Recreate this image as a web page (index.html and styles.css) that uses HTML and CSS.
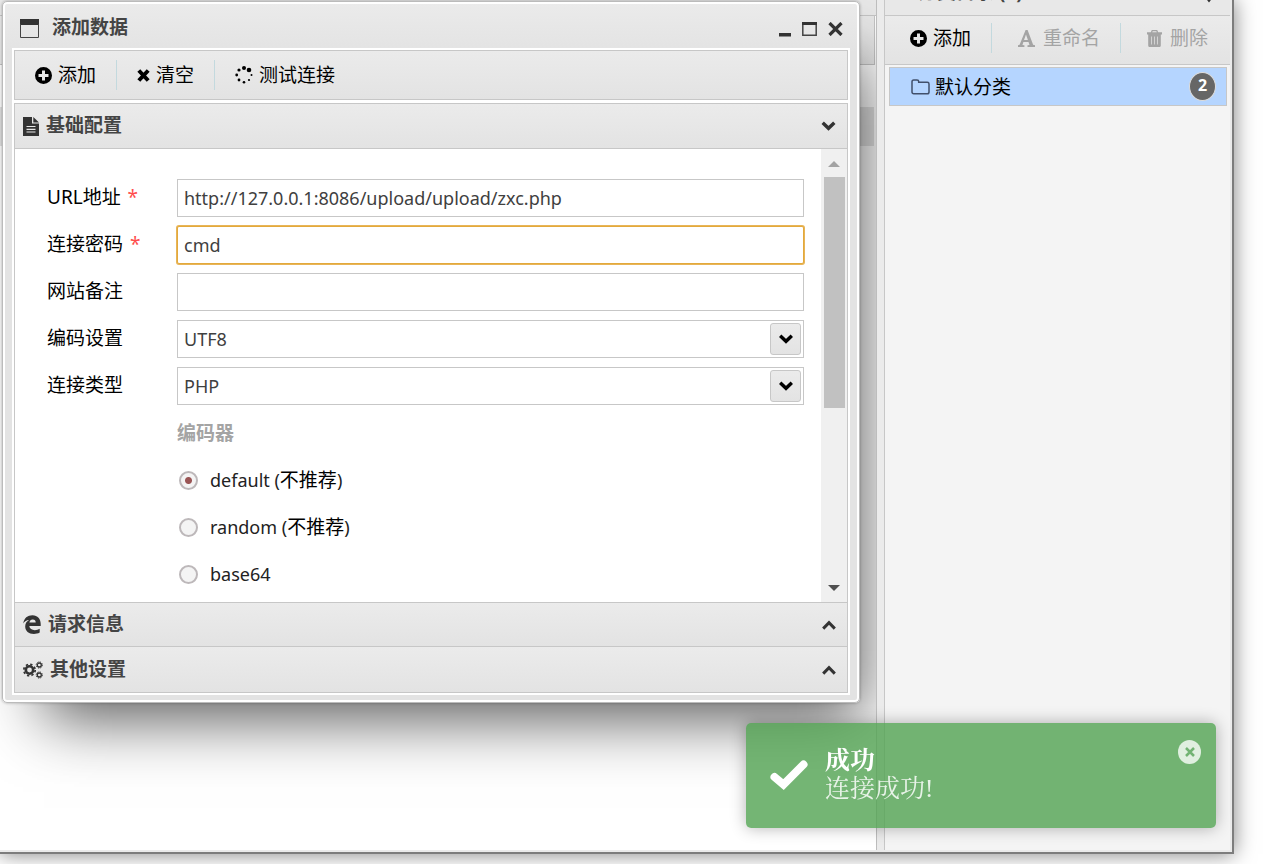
FILE: index.html
```html
<!DOCTYPE html>
<html lang="zh-CN">
<head>
<meta charset="utf-8">
<title>添加数据</title>
<link rel="stylesheet" href="styles.css">
</head>
<body>
<svg class="defs" aria-hidden="true">
  <symbol id="plus" viewBox="0 0 16 16"><path fill="currentColor" fill-rule="evenodd" d="M8 0a8 8 0 1 1 0 16A8 8 0 0 1 8 0zM6.600 3.300v3.300H3.300v2.800h3.300v3.300h2.800V9.400h3.300V6.600H9.400V3.300z"/></symbol>
  <symbol id="down" viewBox="0 0 14 10"><path fill="none" stroke="currentColor" stroke-width="3.400" d="M1.200 1.700 7 7.300l5.800-5.600"/></symbol>
  <symbol id="up" viewBox="0 0 14 10"><path fill="none" stroke="currentColor" stroke-width="3" d="M1.200 8.600 7 2.700l5.800 5.900"/></symbol>
</svg>
<main class="app">
  <section class="pane">
    <div class="pane-head"></div>
    <div class="pane-tools"></div>
    <div class="pane-row"></div>

    <div class="window" role="dialog" aria-labelledby="win-title">
      <header class="win-head">
        <svg class="win-icon" viewBox="0 0 19 19"><path fill="#333" d="M0 0h19v6H0z"/><path fill="none" stroke="#444" d="M.5 5v13.500h18V5"/></svg>
        <h1 id="win-title">添加数据</h1>
        <div class="win-buttons">
          <button type="button" aria-label="最小化"><svg width="12" height="16" viewBox="0 0 12 16"><path fill="#333" d="M0 12h12v3.500H0z"/></svg></button>
          <button type="button" aria-label="最大化"><svg width="15" height="14" viewBox="0 0 15 14"><path fill="none" stroke="#444" stroke-width="1.500" d="M.8.8h13.400v12.400H.8z"/><path fill="#333" d="M0 0h15v3H0z"/></svg></button>
          <button type="button" aria-label="关闭"><svg width="15" height="14" viewBox="0 0 15 14"><path stroke="#333" stroke-width="3.200" d="m1.500 1 12 12m0-12-12 12"/></svg></button>
        </div>
      </header>

      <div class="toolbar win-tools">
        <button type="button"><svg width="17" height="17"><use href="#plus"/></svg>添加</button>
        <button type="button"><svg width="13" height="13" viewBox="0 0 13 13"><path stroke="#000" stroke-width="4" d="m1.800 1.500 9.400 10m0-10-9.400 10"/></svg>清空</button>
        <button type="button"><svg width="18" height="18" viewBox="0 0 18 18"><circle cx="9" cy="2" r="2"/><circle cx="14" cy="4" r="2.300"/><circle cx="16.500" cy="9" r="1"/><circle cx="14" cy="14" r="1.100"/><circle cx="9" cy="16.300" r="1.300"/><circle cx="4" cy="14" r="1.400"/><circle cx="1.700" cy="9" r="1.400"/><circle cx="4" cy="4" r="1.600"/></svg>测试连接</button>
      </div>

      <div class="accordion">
        <button type="button" class="acc-head" aria-expanded="true">
          <svg width="16" height="19" viewBox="0 0 16 19"><path fill="#333" d="M0 0h9v6.500h7V19H0zM10.300 0 16 5.400h-5.700z"/><path stroke="#e7e7e7" stroke-width="1.200" d="M3.500 9.500h9M3.500 12.300h9M3.500 15h9"/></svg>
          <span>基础配置</span><svg class="chev" width="15" height="10"><use href="#down"/></svg>
        </button>
        <div class="acc-body">
          <form class="form">
            <label for="url">URL地址 <b class="req">*</b></label><input class="field" id="url" type="text" value="http://127.0.0.1:8086/upload/upload/zxc.php">
            <label for="pwd">连接密码 <b class="req">*</b></label><input class="field active" id="pwd" type="text" value="cmd">
            <label for="note">网站备注</label><input class="field" id="note" type="text">
            <label for="enc">编码设置</label>
            <div class="combo"><select class="field" id="enc"><option>UTF8</option></select><span class="combo-btn"><svg width="14" height="10"><use href="#down"/></svg></span></div>
            <label for="type">连接类型</label>
            <div class="combo"><select class="field" id="type"><option>PHP</option></select><span class="combo-btn"><svg width="14" height="10"><use href="#down"/></svg></span></div>
            <div class="group">编码器</div>
            <label class="radio"><input type="radio" name="coder" checked><span>default (<span class="han">不推荐</span>)</span></label>
            <label class="radio"><input type="radio" name="coder"><span>random (<span class="han">不推荐</span>)</span></label>
            <label class="radio"><input type="radio" name="coder"><span>base64</span></label>
          </form>
          <div class="scroll">
            <svg width="12" height="6" viewBox="0 0 12 6"><path fill="#a3a3a3" d="m6 0 6 6H0z"/></svg>
            <div class="track"><div class="thumb"></div></div>
            <svg width="12" height="6" viewBox="0 0 12 6"><path fill="#505050" d="m6 6 6-6H0z"/></svg>
          </div>
        </div>
        <button type="button" class="acc-head" aria-expanded="false">
          <svg width="18" height="19" viewBox="0 0 18 19"><path fill="#333" d="M.3 8.400C1 3.200 4.600.3 9.400.3c5.300 0 8.300 3.700 8.300 8.800v2H6.300c.2 2.800 2.600 4.100 5.500 4.100 1.900 0 3.500-.5 4.900-1.400v3.800c-1.700 1-3.700 1.400-5.800 1.400-5.300 0-8.700-2.800-8.700-7.400 0-3 1.400-5.200 3.900-6.500C3.500 5.300 1.600 6.700.3 8.400zm6.100-.8h6.300c0-2-.9-3.200-3-3.200-1.800 0-2.900 1.200-3.300 3.200z"/></svg>
          <span>请求信息</span><svg class="chev" width="14" height="10"><use href="#up"/></svg>
        </button>
        <button type="button" class="acc-head" aria-expanded="false">
          <svg width="20" height="18" viewBox="0 0 20 18"><g fill="none" stroke="#333"><circle cx="6.500" cy="9" r="3.700" stroke-width="2.600"/><circle cx="6.500" cy="9" r="5.700" stroke-width="1.700" stroke-dasharray="2.300 2.180"/><circle cx="16.300" cy="4" r="2" stroke-width="1.300"/><circle cx="16.300" cy="4" r="3.100" stroke-width="1" stroke-dasharray="1.300 1.140"/><circle cx="16.300" cy="14" r="2" stroke-width="1.300"/><circle cx="16.300" cy="14" r="3.100" stroke-width="1" stroke-dasharray="1.300 1.140"/></g></svg>
          <span>其他设置</span><svg class="chev" width="14" height="10"><use href="#up"/></svg>
        </button>
      </div>
    </div>
  </section>

  <aside class="side">
    <header class="side-head"><h2>分类目录 (1)</h2><svg width="10" height="16" viewBox="0 0 10 16"><path fill="none" stroke="#333" stroke-width="3" d="m1 7 4 5 4-5"/></svg></header>
    <div class="toolbar side-tools">
      <button type="button"><svg width="17" height="17"><use href="#plus"/></svg>添加</button>
      <button type="button" disabled><svg width="17" height="17" viewBox="0 0 17 17"><path fill="currentColor" fill-rule="evenodd" d="M7.600 0h2l5.500 14.800 1.900.5V17h-7.500v-1.700l2-.4-1-3H5.400l-1 3 2 .4V17H0v-1.700l1.600-.5zm.4 4.600-2 5.500h3.900z"/></svg>重命名</button>
      <button type="button" disabled><svg width="15" height="17" viewBox="0 0 15 17"><path fill="currentColor" fill-rule="evenodd" d="M4.800 0h5.400l1 2.300H15v2.200h-1.200V15.500c0 .9-.5 1.500-1.300 1.500h-10c-.8 0-1.300-.6-1.300-1.500V4.500H0V2.300h3.800zm.9 1.300-.5 1h4.600l-.5-1zM4.200 6.500v8h.7v-8zm3 0v8h.7v-8zm3 0v8h.7v-8z"/></svg>删除</button>
    </div>
    <ul class="list">
      <li class="item">
        <svg width="19" height="16" viewBox="0 0 19 16"><path fill="none" stroke="#42506b" stroke-width="1.500" d="M1 13V2.800C1 1.700 1.700 1 2.700 1H6c1 0 1.700.7 1.700 1.600v.7h8.600c1 0 1.700.7 1.700 1.700v8c0 1-.7 1.800-1.700 1.800H2.700C1.700 14.800 1 14 1 13z"/></svg>
        <span>默认分类</span><span class="badge">2</span>
      </li>
    </ul>
  </aside>
</main>

<div class="toast" role="status">
  <svg class="check" viewBox="0 0 38 30"><path fill="none" stroke="#fff" stroke-width="8" stroke-linecap="round" stroke-linejoin="miter" d="M4.500 17 13.500 24.500 33.500 4.500"/></svg>
  <div class="toast-text"><strong>成功</strong><span>连接成功!</span></div>
  <button type="button" class="toast-close" aria-label="关闭"><svg width="10" height="10" viewBox="0 0 10 10"><path stroke="#72b373" stroke-width="2.500" d="m1 1 8 8m0-8-8 8"/></svg></button>
</div>
</body>
</html>
```

FILE: styles.css
```css
* { box-sizing: border-box; }

body {
  margin: 0;
  min-height: 100vh;
  display: flex;
  flex-direction: column;
  background: #fff;
  color: #000;
  font: 19px/24px "Noto Sans", "Noto Sans CJK SC", sans-serif;
  overflow: hidden;
}

button, input, select { font: inherit; color: inherit; margin: 0; }
button { border: 0; padding: 0; background: none; }
h1, h2 { margin: 0; font-size: 19px; line-height: 24px; color: #444; }
svg { flex: none; display: block; }
.defs { position: absolute; width: 0; height: 0; }

.app {
  flex: 1;
  display: grid;
  grid-template-columns: minmax(0, 1fr) 346px;
  column-gap: 7px;
  margin: 0 29px 10px 0;
  padding: 0 2px 2px 0;
  background: #ebebeb;
  border: solid #7d7d7d;
  border-width: 0 2px 2px 0;
  box-shadow: 0 0 20px rgba(0, 0, 0, 0.5);
}

/* background pane */
.pane {
  position: relative;
  overflow: hidden;
  background: #fff;
  border-right: 1px solid #bdbdbd;
}
.pane-head { height: 16px; background: #e8e8e8; border-bottom: 1px solid #c4c4c4; }
.pane-tools { height: 49px; margin-right: 1px; background: #e8e8e8; border: solid #c4c4c4; border-width: 0 1px 1px 0; }
.pane-row { height: 39px; margin: 42px 2px 0 0; background: #e3e3e3; }

/* dialog */
.window {
  position: absolute;
  left: 2px;
  right: 16px;
  top: 1px;
  padding: 0 10px 9px;
  border: 1px solid #bbb;
  border-radius: 5px;
  background: linear-gradient(#ebebeb, #e3e3e3 50px);
  box-shadow: inset 0 0 0 2px #fff, 22px 36px 60px -20px rgba(0, 0, 0, 0.65), 0 0 3px rgba(0, 0, 0, 0.3);
}
.win-head {
  display: flex;
  align-items: center;
  height: 48px;
  padding: 5px 6px 0 7px;
}
.win-icon { width: 19px; height: 19px; }
.win-head h1 { margin-left: 13px; padding-bottom: 4px; }
.win-buttons { display: flex; align-items: center; gap: 11px; margin-left: auto; }

.toolbar { display: flex; align-items: center; background: linear-gradient(#ebebeb, #e3e3e3); }
.toolbar button {
  display: flex;
  align-items: center;
  gap: 6px;
  height: 30px;
  padding: 0 20px;
}
.toolbar button + button { border-left: 1px solid #c3d9de; }
.toolbar button:disabled { color: #a4a4a4; }
.win-tools { height: 50px; border: 1px solid #c7c7c7; box-shadow: 0 0 0 2px #fff; margin: 0 1px 3px; }

.accordion { margin: 0 1px; border: 1px solid #c7c7c7; box-shadow: 0 0 0 2px #fff; }
.acc-head {
  display: flex;
  align-items: center;
  width: 100%;
  height: 45px;
  gap: 7px;
  padding: 0 11px 0 8px;
  background: linear-gradient(#ebebeb, #e3e3e3);
  border-bottom: 1px solid #c7c7c7;
  font-weight: 700;
  color: #444;
}
.acc-head span { padding-bottom: 2px; }
.acc-head:last-child { border-bottom: 0; }
.acc-body + .acc-head { border-top: 1px solid #c7c7c7; }
.chev { margin-left: auto; color: #333; }

.acc-body { display: flex; height: 453px; overflow: hidden; background: #fff; }
.form {
  flex: 1;
  display: grid;
  grid-template-columns: 130px minmax(0, 1fr);
  grid-auto-rows: 38px;
  row-gap: 9px;
  align-items: center;
  padding: 30px 17px 0 32px;
}
.form > label { padding-bottom: 3px; }
.req { color: #ff4d4d; font-weight: 400; margin-left: 2px; }
.field {
  width: 100%;
  height: 38px;
  padding: 0 6px;
  border: 1px solid #c7c7c7;
  border-radius: 0;
  background: #fff;
  color: #404040;
  font-size: 18px;
  outline: 0;
  appearance: none;
}
.field.active { border-color: #e3a93c; border-radius: 2px; box-shadow: 0 0 0 1px #e8b558; }
.combo { position: relative; }
.combo .field { display: block; }
.combo-btn {
  position: absolute;
  right: 3px;
  top: 3px;
  width: 31px;
  height: 32px;
  display: grid;
  place-items: center;
  border: 1px solid #c7c7c7;
  border-radius: 3px;
  background: linear-gradient(#ebebeb, #e3e3e3);
  color: #000;
  pointer-events: none;
}
.group, .form > .radio { grid-column: 2; }
.group { color: #a4a4a4; font-weight: 700; }
.form > .radio { display: flex; align-items: center; gap: 12px; padding: 0 0 0 2px; font-size: 18px; color: #222; }
.han { font-size: 19px; color: #000; }
.radio input {
  appearance: none;
  width: 19px;
  height: 19px;
  border: 2px solid #bdb8ba;
  border-radius: 50%;
  background: #f4f4f4;
}
.radio input:checked { background: radial-gradient(circle, #9a5555 3px, #f4f4f4 4px); }

.scroll {
  display: flex;
  flex-direction: column;
  align-items: center;
  width: 26px;
  padding: 12px 0 11px;
  background: #f0f0f0;
}
.track { flex: 1; width: 21px; padding: 10px 0; }
.thumb { height: 231px; background: #c1c1c1; }

/* category sidebar */
.side { background: #f4f4f4; border-left: 1px solid #c7c7c7; overflow: hidden; }
.side-head {
  display: flex;
  justify-content: space-between;
  align-items: flex-end;
  height: 16px;
  padding: 0 16px 11px 33px;
  background: #e8e8e8;
  border-bottom: 1px solid #c7c7c7;
  overflow: hidden;
}
.side-tools { height: 49px; padding: 0 0 4px 5px; border-bottom: 1px solid #c7c7c7; }
.side-tools button + button { padding: 0 20px 0 26px; gap: 8px; }
.list { list-style: none; margin: 0; padding: 2px 3px 0 4px; }
.item {
  display: flex;
  align-items: center;
  gap: 5px;
  height: 39px;
  padding: 0 10px 0 21px;
  background: #b5d5ff;
  border: 1px solid #c7c7c7;
}
.badge {
  margin-left: auto;
  width: 27px;
  height: 29px;
  border: 1px solid #ddd;
  border-radius: 50%;
  background: #666;
  color: #fff;
  font: 700 16px/25px "Noto Sans", sans-serif;
  text-align: center;
}

/* notification */
.toast {
  position: fixed;
  right: 47px;
  bottom: 36px;
  width: 470px;
  max-width: 90vw;
  display: flex;
  align-items: center;
  gap: 17px;
  padding: 24px 15px 25px 24px;
  border-radius: 5px;
  background: rgba(81, 163, 81, 0.8);
  box-shadow: 0 0 16px rgba(0, 0, 0, 0.3);
  color: #fff;
}
.check { width: 38px; height: 30px; }
.toast-text { flex: 1; font: 25px/28px "Liberation Serif", "Noto Serif CJK SC", "Noto Sans CJK SC", serif; }
.toast-text strong, .toast-text span { display: block; }
.toast-text span { color: #e8f3e8; }
.toast-close {
  align-self: flex-start;
  display: grid;
  place-items: center;
  width: 23px;
  height: 24px;
  margin-top: -7px;
  border-radius: 50%;
  background: #e0efe0;
}
```
